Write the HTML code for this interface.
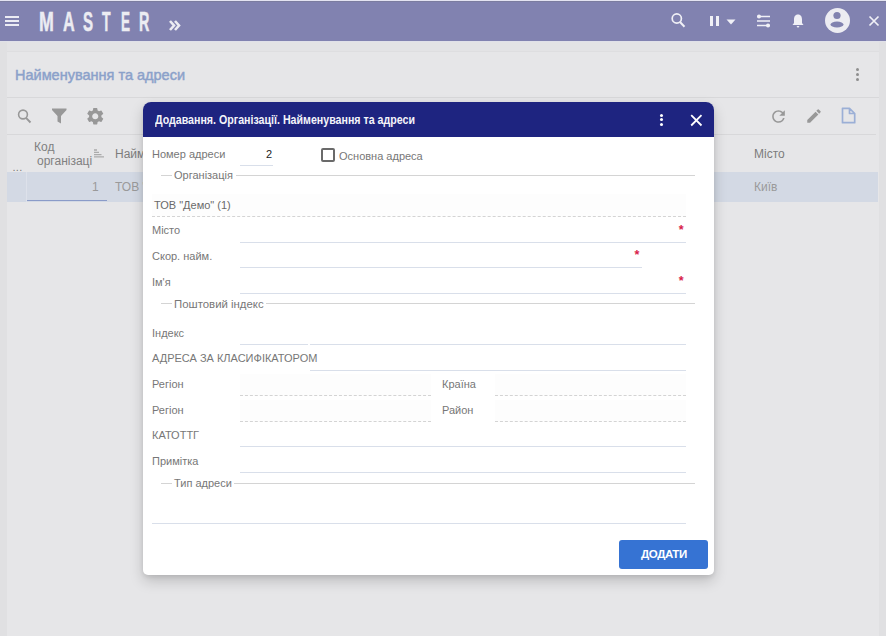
<!DOCTYPE html>
<html><head><meta charset="utf-8">
<style>
*{box-sizing:border-box;margin:0;padding:0}
html,body{width:886px;height:636px;overflow:hidden}
body{position:relative;background:#e3e3e5;font-family:"Liberation Sans",sans-serif;color:#707070}
.a{position:absolute}
.t{position:absolute;white-space:nowrap;line-height:1}
#topline{left:0;top:0;width:886px;height:1px;background:#e3e3f1}
#hdr{left:0;top:1px;width:886px;height:40px;background:#8182b0}
.ham{left:5px;width:14px;height:1.6px;background:#ececf4}
.ml{position:absolute;top:7.8px;font-size:27px;-webkit-text-stroke:0.5px #ececf2;font-weight:700;color:#ececf2;line-height:1;transform-origin:0 0}
#lstrip{left:0;top:41px;width:7px;height:595px;background:#e0e0e2}
#rstrip{left:879px;top:41px;width:7px;height:595px;background:#e0e0e2}
#panel{left:7px;top:52px;width:872px;height:584px;background:#e6e6e8}
.hl{height:1px;background:#d8d8da}
#dlg{left:143px;top:102px;width:571px;height:473px;background:#fff;border-radius:8px 8px 5px 5px;box-shadow:0 6px 14px rgba(0,0,0,0.18),0 2px 4px rgba(0,0,0,0.08);overflow:hidden}
#dhdr{left:0;top:0;width:571px;height:35px;background:#1e2480}
.lbl{font-size:11px;color:#777}
.ul{height:1px;background:#d9dfea}
.fs{height:1px;background:#d4d4d4}
.ro{background:#fdfdfd;border-bottom:1px dashed #d4d4d4}
.ast{color:#d81e4a;font-size:12.5px;font-weight:700}
</style></head><body>
<div class="a" id="topline"></div>
<div class="a" id="hdr">
  <div class="a" style="left:0;top:0;width:886px;height:1px;background:#7b7c9f"></div>
  <div class="a ham" style="top:15.2px"></div>
  <div class="a ham" style="top:19.3px"></div>
  <div class="a ham" style="top:23.3px"></div>
  <span class="ml" style="left:38.7px;transform:scaleX(0.66)">M</span>
  <span class="ml" style="left:63px;transform:scaleX(0.6)">A</span>
  <span class="ml" style="left:83.3px;transform:scaleX(0.56)">S</span>
  <span class="ml" style="left:101.5px;transform:scaleX(0.52)">T</span>
  <span class="ml" style="left:121px;transform:scaleX(0.5)">E</span>
  <span class="ml" style="left:139px;transform:scaleX(0.53)">R</span>
  <svg class="a" style="left:168px;top:18px" width="14" height="13" viewBox="0 0 14 13"><path d="M2 2 L6 6.5 L2 11 M7 2 L11 6.5 L7 11" stroke="#ececf2" stroke-width="2.6" fill="none"/></svg>
  <!-- search -->
  <svg class="a" style="left:669px;top:9px" width="20" height="20" viewBox="0 0 20 20"><circle cx="7.8" cy="8.5" r="4.6" stroke="#f0f0f6" stroke-width="1.7" fill="none"/><path d="M11 12 L15.5 16.8" stroke="#f0f0f6" stroke-width="2"/></svg>
  <!-- pause + caret -->
  <div class="a" style="left:710px;top:15px;width:3px;height:10px;background:#f0f0f6"></div>
  <div class="a" style="left:715.5px;top:15px;width:3px;height:10px;background:#f0f0f6"></div>
  <svg class="a" style="left:726px;top:18px" width="10" height="6" viewBox="0 0 10 6"><path d="M0.5 0.5 L9.5 0.5 L5 5.5Z" fill="#f0f0f6"/></svg>
  <!-- tune -->
  <svg class="a" style="left:756px;top:12px" width="16" height="16" viewBox="0 0 16 16"><path d="M1 3.5 H14 M1 8 H14 M1 12.5 H14" stroke="#f0f0f6" stroke-width="1.6"/><circle cx="3" cy="3.5" r="2" fill="#f0f0f6"/><circle cx="12" cy="12.5" r="2" fill="#f0f0f6"/></svg>
  <!-- bell -->
  <svg class="a" style="left:791px;top:12px" width="14" height="16" viewBox="0 0 14 16"><path d="M7 1.5 C4 1.5 3 4 3 6.5 V10 L1.5 12 H12.5 L11 10 V6.5 C11 4 10 1.5 7 1.5Z" fill="#f0f0f6"/><path d="M5.5 13 H8.5 L7 15Z" fill="#f0f0f6"/></svg>
  <!-- avatar -->
  <svg class="a" style="left:824px;top:6px" width="28" height="28" viewBox="0 0 28 28"><circle cx="13.5" cy="13.5" r="12.5" fill="#ececf2"/><circle cx="13" cy="8.5" r="3.6" fill="#8182b0"/><ellipse cx="13" cy="17.5" rx="6.5" ry="3" fill="#8182b0"/></svg>
  <!-- close -->
  <svg class="a" style="left:867px;top:13px" width="14" height="14" viewBox="0 0 14 14"><path d="M2.5 2.5 L11.5 11.5 M11.5 2.5 L2.5 11.5" stroke="#f0f0f6" stroke-width="1.7"/></svg>
</div>
<div class="a" id="lstrip"></div>
<div class="a" id="rstrip"></div>
<div class="a" id="panel"></div>
<div class="a" style="left:0;top:41px;width:886px;height:1px;background:#e0e1e9"></div>
<div class="a" style="left:7px;top:51px;width:872px;height:1px;background:#dedee0"></div>
<div class="t" style="left:15px;top:68px;font-size:14.5px;color:#8ba1ca;-webkit-text-stroke:0.45px #8ba1ca">Найменування та адреси</div>
<!-- kebab -->
<div class="a" style="left:856px;top:68px;width:3px;height:3px;border-radius:2px;background:#8e8e8e"></div>
<div class="a" style="left:856px;top:73px;width:3px;height:3px;border-radius:2px;background:#8e8e8e"></div>
<div class="a" style="left:856px;top:78px;width:3px;height:3px;border-radius:2px;background:#8e8e8e"></div>
<div class="a hl" style="left:7px;top:97px;width:872px"></div>
<!-- toolbar icons -->
<svg class="a" style="left:16px;top:108px" width="18" height="18" viewBox="0 0 18 18"><circle cx="7" cy="6.5" r="4.4" stroke="#989898" stroke-width="1.6" fill="none"/><path d="M10 9.8 L14.5 14.5" stroke="#989898" stroke-width="1.9"/></svg>
<svg class="a" style="left:51px;top:108px" width="16" height="16" viewBox="0 0 16 16"><path d="M1 0.5 H15.5 V2 L10 8 V15.5 L6.5 13.5 V8 L1 2Z" fill="#989898"/></svg>
<svg class="a" style="left:84.5px;top:106px" width="20.5" height="20.5" viewBox="0 0 24 24"><path fill="#989898" d="M19.14 12.94c.04-.3.06-.61.06-.94 0-.32-.02-.64-.07-.94l2.03-1.58a.49.49 0 0 0 .12-.61l-1.92-3.32a.488.488 0 0 0-.59-.22l-2.39.96c-.5-.38-1.03-.7-1.62-.94l-.36-2.54a.484.484 0 0 0-.48-.41h-3.84c-.24 0-.43.17-.47.41l-.36 2.54c-.59.24-1.13.57-1.62.94l-2.39-.96c-.22-.08-.47 0-.59.22L2.74 8.87c-.12.21-.08.47.12.61l2.03 1.58c-.05.3-.09.63-.09.94s.02.64.07.94l-2.03 1.58a.49.49 0 0 0-.12.61l1.920 3.32c.12.22.37.29.59.22l2.39-.96c.5.38 1.03.7 1.62.94l.36 2.54c.05.24.24.41.48.41h3.84c.24 0 .44-.17.47-.41l.36-2.54c.59-.24 1.13-.56 1.62-.94l2.39.96c.22.08.47 0 .59-.22l1.92-3.32c.12-.22.07-.47-.12-.61l-2.01-1.58zM12 15.6c-1.98 0-3.6-1.62-3.6-3.6s1.62-3.6 3.6-3.6 3.6 1.62 3.6 3.6-1.62 3.6-3.6 3.6z"/></svg>
<svg class="a" style="left:768.5px;top:106.5px" width="19" height="19" viewBox="0 0 24 24"><path fill="#989898" d="M17.65 6.35A7.958 7.958 0 0 0 12 4c-4.42 0-7.99 3.58-7.99 8s3.57 8 7.99 8c3.73 0 6.84-2.55 7.73-6h-2.08A5.99 5.99 0 0 1 12 18c-3.31 0-6-2.69-6-6s2.69-6 6-6c1.66 0 3.14.69 4.22 1.78L13 11h7V4l-2.35 2.35z"/></svg>
<svg class="a" style="left:804.5px;top:106.5px" width="18" height="18" viewBox="0 0 24 24"><path fill="#989898" d="M3 17.25V21h3.75L17.81 9.94l-3.75-3.75L3 17.25zM20.71 7.04a.996.996 0 0 0 0-1.41l-2.34-2.34a.996.996 0 0 0-1.41 0l-1.83 1.83 3.75 3.75 1.83-1.83z"/></svg>
<svg class="a" style="left:841px;top:107px" width="15" height="17" viewBox="0 0 15 17"><path d="M1.5 1.3 H8.5 L13.7 6.5 V15.7 H1.5Z M8.5 1.3 V6.5 H13.7" stroke="#9bafd6" stroke-width="1.7" fill="none" stroke-linejoin="round"/></svg>
<div class="a hl" style="left:7px;top:134px;width:869px"></div>
<!-- table header -->
<div class="t" style="left:34px;top:141px;font-size:12px;color:#808080">Код</div>
<div class="t" style="left:37px;top:154.5px;font-size:12px;color:#808080">організаці</div>
<svg class="a" style="left:94px;top:149px" width="12" height="10" viewBox="0 0 12 10"><path d="M0 1 H3 M0 3.3 H5 M0 5.6 H7.5 M0 7.9 H10" stroke="#ababab" stroke-width="1.3"/></svg>
<div class="t" style="left:115px;top:147.5px;font-size:12px;color:#7c7c7c">Найм</div>
<div class="t" style="left:754px;top:147.5px;font-size:12px;color:#7c7c7c">Місто</div>
<div class="t" style="left:12.5px;top:162px;font-size:11px;color:#7a7a7a;letter-spacing:0.3px">...</div>
<!-- row -->
<div class="a" style="left:7px;top:172px;width:871px;height:30px;background:#d3d9e4"></div>
<div class="a" style="left:26px;top:172px;width:1px;height:30px;background:#dde1ea"></div>
<div class="a" style="left:27px;top:200px;width:80px;height:1px;background:#8a9bc8"></div>
<div class="t" style="left:92px;top:181px;font-size:12px;color:#9a9a9a">1</div>
<div class="t" style="left:115px;top:181px;font-size:12px;color:#9a9a9a">ТОВ "Демо"</div>
<div class="t" style="left:754px;top:181px;font-size:12px;color:#9a9a9a">Київ</div>

<!-- DIALOG -->
<div class="a" id="dlg">
  <div class="a" id="dhdr">
    <div class="t" style="left:12px;top:12px;font-size:12px;font-weight:700;color:#f4f4fa;transform:scaleX(0.886);transform-origin:0 0">Додавання. Організації. Найменування та адреси</div>
    <div class="a" style="left:516.5px;top:11.5px;width:3.2px;height:3.2px;border-radius:2px;background:#fff"></div>
    <div class="a" style="left:516.5px;top:16.3px;width:3.2px;height:3.2px;border-radius:2px;background:#fff"></div>
    <div class="a" style="left:516.5px;top:21px;width:3.2px;height:3.2px;border-radius:2px;background:#fff"></div>
    <svg class="a" style="left:546px;top:10.5px" width="14" height="14" viewBox="0 0 14 14"><path d="M2.2 2.2 L12.5 12.5 M12.5 2.2 L2.2 12.5" stroke="#fff" stroke-width="1.8"/></svg>
  </div>
</div>

<!-- dialog body -->
<div class="t lbl" style="left:152px;top:149px">Номер адреси</div>
<div class="t" style="left:266px;top:149px;font-size:11px;color:#222">2</div>
<div class="a ul" style="left:240px;top:165px;width:33px"></div>
<div class="a" style="left:321px;top:148px;width:14px;height:14px;border:2px solid #6a6a6a;border-radius:2px"></div>
<div class="t lbl" style="left:339px;top:150.5px;color:#777">Основна адреса</div>
<div class="a fs" style="left:161px;top:175px;width:11px"></div>
<div class="t lbl" style="left:174px;top:170.4px">Організація</div>
<div class="a fs" style="left:236px;top:175px;width:459px"></div>
<div class="a ro" style="left:152px;top:194px;width:534px;height:23px"></div>
<div class="t lbl" style="left:154px;top:200.2px;color:#6a6a6a">ТОВ "Демо" (1)</div>
<div class="t lbl" style="left:152px;top:224.7px">Місто</div>
<div class="a ul" style="left:240px;top:242px;width:446px"></div>
<div class="t ast" style="left:678.7px;top:223.7px">*</div>
<div class="t lbl" style="left:152px;top:250.8px">Скор. найм.</div>
<div class="a ul" style="left:240px;top:267px;width:402px"></div>
<div class="t ast" style="left:634.6px;top:249px">*</div>
<div class="t lbl" style="left:152px;top:276.5px">Ім'я</div>
<div class="a ul" style="left:240px;top:293px;width:446px"></div>
<div class="t ast" style="left:678.7px;top:275.2px">*</div>
<div class="a fs" style="left:161px;top:303px;width:11px"></div>
<div class="t lbl" style="left:174px;top:298.5px;font-size:11.4px">Поштовий індекс</div>
<div class="a fs" style="left:266px;top:303px;width:429px"></div>
<div class="t lbl" style="left:152px;top:327.8px">Індекс</div>
<div class="a ul" style="left:240px;top:344px;width:68px"></div>
<div class="a ul" style="left:310px;top:344px;width:376px"></div>
<div class="t lbl" style="left:152px;top:352.6px">АДРЕСА ЗА КЛАСИФІКАТОРОМ</div>
<div class="a ul" style="left:310px;top:370px;width:376px"></div>
<div class="a ro" style="left:240px;top:374px;width:191px;height:22px"></div>
<div class="a ro" style="left:495px;top:374px;width:191px;height:22px"></div>
<div class="t lbl" style="left:152px;top:379px">Регіон</div>
<div class="t lbl" style="left:442px;top:379px">Країна</div>
<div class="a ro" style="left:240px;top:400px;width:191px;height:22px"></div>
<div class="a ro" style="left:495px;top:400px;width:191px;height:22px"></div>
<div class="t lbl" style="left:152px;top:405px">Регіон</div>
<div class="t lbl" style="left:442px;top:405px">Район</div>
<div class="t lbl" style="left:152px;top:429.7px">КАТОТТГ</div>
<div class="a ul" style="left:240px;top:446px;width:446px"></div>
<div class="t lbl" style="left:152px;top:455.8px">Примітка</div>
<div class="a ul" style="left:240px;top:472px;width:446px"></div>
<div class="a fs" style="left:161px;top:483px;width:11px"></div>
<div class="t lbl" style="left:174px;top:478.4px">Тип адреси</div>
<div class="a fs" style="left:234px;top:483px;width:461px"></div>
<div class="a ul" style="left:152px;top:523px;width:534px"></div>
<div class="a" style="left:619px;top:540px;width:89px;height:29px;background:#3673d3;border-radius:3px"></div>
<div class="t" style="left:641px;top:549px;font-size:11.5px;font-weight:700;color:#fff;letter-spacing:-0.4px">ДОДАТИ</div>
</body></html>
